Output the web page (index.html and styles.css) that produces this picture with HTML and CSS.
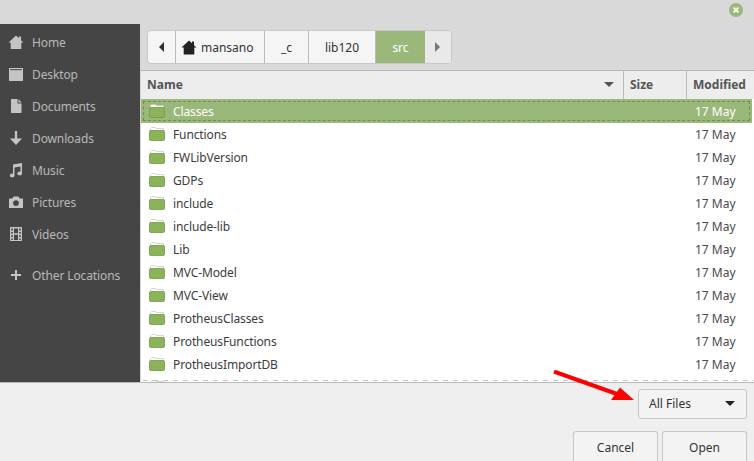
FILE: index.html
```html
<!DOCTYPE html>
<html lang="en">
<head>
<meta charset="utf-8">
<title>Open File</title>
<link rel="stylesheet" href="styles.css">
</head>
<body>
<div class="dialog">
  <header class="titlebar">
    <span class="close">
      <svg width="14" height="14" viewBox="0 0 14 14"><circle cx="7" cy="7" r="7" fill="#9ab87a"/><path d="M4.6 4.6l4.8 4.8M9.4 4.6l-4.8 4.8" stroke="#fff" stroke-width="2"/></svg>
    </span>
  </header>
  <div class="main">
    <nav class="sidebar">
      <div class="place"><svg class="pi" viewBox="0 0 16 16"><path d="M8 1.5L0.5 8.5h2.2V15h10.6V8.5h2.2L13 6.2V2.5h-2v1.8z"/></svg><span>Home</span></div>
      <div class="place"><svg class="pi" viewBox="0 0 16 16"><path d="M1 2h14v13H1z"/><path d="M2 3.2h12v1H2z" fill="#454545"/></svg><span>Desktop</span></div>
      <div class="place"><svg class="pi" viewBox="0 0 16 16"><path d="M3 1h6.5v4.5H13.500V15H3zM10.500 1l3 3.500h-3z"/></svg><span>Documents</span></div>
      <div class="place"><svg class="pi" viewBox="0 0 16 16"><path d="M6.800 1h2.400v7.500H14L8 15 2 8.500h4.800z"/></svg><span>Downloads</span></div>
      <div class="place"><svg class="pi" viewBox="0 0 16 16"><path d="M5 2.500L14 1v10.500a2.300 1.900 0 1 1-1.500-1.800V4.600L6.500 5.600v7.900a2.300 1.900 0 1 1-1.500-1.800z"/></svg><span>Music</span></div>
      <div class="place"><svg class="pi" viewBox="0 0 16 16"><path fill-rule="evenodd" d="M5.500 2.500h5l1 2H15v9.500H1V4.500h3.500zM8 6.200a2.900 2.900 0 1 0 0 5.800 2.900 2.900 0 0 0 0-5.800z"/></svg><span>Pictures</span></div>
      <div class="place"><svg class="pi" viewBox="0 0 16 16"><path fill-rule="evenodd" d="M2 1h12v14H2zM3.200 2.500v2h1.600v-2zM3.200 6v1.800h1.600V6zM3.200 9.300v1.800h1.600V9.300zM3.200 12.500v1.500h1.600v-1.500zM11.200 2.500v2h1.600v-2zM11.200 6v1.800h1.600V6zM11.200 9.300v1.800h1.600V9.300zM11.200 12.500v1.500h1.600v-1.500zM6 2.500v4.800h4V2.500zM6 8.700V14h4V8.700z"/></svg><span>Videos</span></div>
      <div class="place other"><svg class="pi" viewBox="0 0 16 16"><path d="M7 3h2v4h4v2H9v4H7V9H3V7h4z"/></svg><span>Other Locations</span></div>
    </nav>
    <section class="browser">
      <div class="pathbar-wrap">
        <div class="pathbar">
          <div class="seg arrow back"><svg width="6" height="10" viewBox="0 0 6 10"><path d="M5 0v10L0 5z" fill="#2e2e2e"/></svg></div>
          <div class="seg s-home"><svg width="16" height="15" viewBox="0 0 16 15"><path d="M8 0.500L0.500 7.500h2.200V14.500h10.600V7.500h2.200L13 5.200V1.500h-2v1.800z" fill="#222"/></svg><span>mansano</span></div>
          <div class="seg s-c">_c</div>
          <div class="seg s-lib">lib120</div>
          <div class="seg s-src">src</div>
          <div class="seg arrow fwd"><svg width="6" height="10" viewBox="0 0 6 10"><path d="M0 0v10l5-5z" fill="#777"/></svg></div>
        </div>
      </div>
      <div class="thead">
        <div class="th c-name"><span>Name</span><i class="sort"></i></div>
        <div class="th c-size">Size</div>
        <div class="th c-mod">Modified</div>
      </div>
      <div class="rows">
        <div class="row selected"><svg class="folder" viewBox="0 0 16 14"><use href="#fld"/></svg><span class="fname">Classes</span><span class="fdate">17 May</span></div>
        <div class="row"><svg class="folder" viewBox="0 0 16 14"><use href="#fld"/></svg><span class="fname">Functions</span><span class="fdate">17 May</span></div>
        <div class="row"><svg class="folder" viewBox="0 0 16 14"><use href="#fld"/></svg><span class="fname">FWLibVersion</span><span class="fdate">17 May</span></div>
        <div class="row"><svg class="folder" viewBox="0 0 16 14"><use href="#fld"/></svg><span class="fname">GDPs</span><span class="fdate">17 May</span></div>
        <div class="row"><svg class="folder" viewBox="0 0 16 14"><use href="#fld"/></svg><span class="fname">include</span><span class="fdate">17 May</span></div>
        <div class="row"><svg class="folder" viewBox="0 0 16 14"><use href="#fld"/></svg><span class="fname">include-lib</span><span class="fdate">17 May</span></div>
        <div class="row"><svg class="folder" viewBox="0 0 16 14"><use href="#fld"/></svg><span class="fname">Lib</span><span class="fdate">17 May</span></div>
        <div class="row"><svg class="folder" viewBox="0 0 16 14"><use href="#fld"/></svg><span class="fname">MVC-Model</span><span class="fdate">17 May</span></div>
        <div class="row"><svg class="folder" viewBox="0 0 16 14"><use href="#fld"/></svg><span class="fname">MVC-View</span><span class="fdate">17 May</span></div>
        <div class="row"><svg class="folder" viewBox="0 0 16 14"><use href="#fld"/></svg><span class="fname">ProtheusClasses</span><span class="fdate">17 May</span></div>
        <div class="row"><svg class="folder" viewBox="0 0 16 14"><use href="#fld"/></svg><span class="fname">ProtheusFunctions</span><span class="fdate">17 May</span></div>
        <div class="row"><svg class="folder" viewBox="0 0 16 14"><use href="#fld"/></svg><span class="fname">ProtheusImportDB</span><span class="fdate">17 May</span></div>
        <div class="row"><svg class="folder" viewBox="0 0 16 14"><use href="#fld"/></svg></div>
        <div class="dashes"></div>
      </div>
    </section>
  </div>
  <footer class="footer">
    <div class="filter-row">
      <div class="combo"><span>All Files</span><i class="caret"></i></div>
    </div>
    <div class="actions">
      <div class="btn">Cancel</div>
      <div class="btn">Open</div>
    </div>
    <svg class="red-arrow" width="90" height="40" viewBox="0 0 90 40"><path d="M3 1.500L66 24" stroke="#f00" stroke-width="4" fill="none"/><path d="M83 30L60 30L69 17.500z" fill="#f00"/></svg>
  </footer>
</div>
<svg width="0" height="0" class="defs">
  <defs>
    <g id="fld">
      <path d="M1.500 4V1.500L2.500 0.500H6.500L7.500 1.500H14.500V5z" fill="#fff" stroke="#c4c4c4" stroke-width="0.700"/>
      <rect x="0.500" y="3.500" width="15" height="10" rx="1.200" fill="#8ab35a" stroke="#739a48" stroke-width="0.800"/>
    </g>
  </defs>
</svg>
</body>
</html>
```
FILE: styles.css
```css
* { box-sizing: border-box; }
html, body { margin: 0; padding: 0; }
body {
  width: 754px;
  height: 461px;
  overflow: hidden;
  font-family: "Noto Sans", "Open Sans", sans-serif;
  font-size: 12px;
  color: #3a3a3a;
  background: #d8d8d8;
}
.dialog { width: 754px; height: 461px; display: flex; flex-direction: column; overflow: hidden; }
.defs { position: absolute; }

.titlebar { height: 24px; flex: none; background: #d9d9d9; display: flex; justify-content: flex-end; padding: 3px 11px 0 0; }
.close { width: 14px; height: 14px; display: block; }
.close svg { display: block; }

.main { flex: none; height: 358px; display: flex; }

.sidebar { flex: none; width: 140px; background: #454545; color: #b8b8b8; padding-top: 2px; }
.place { height: 32px; display: flex; align-items: center; padding-left: 8px; gap: 8px; letter-spacing: -0.12px; }
.place.other { margin-top: 9px; }
.pi { width: 16px; height: 16px; fill: #c4c4c4; flex: none; }

.browser { flex: 1; min-width: 0; display: flex; flex-direction: column; background: #fff; border-left: 1px solid #d4d4d4; }
.pathbar-wrap { flex: none; height: 47px; background: #d9d9d9; padding: 6px 0 0 6px; border-bottom: 1px solid #b8b8b8; }
.pathbar { display: inline-flex; height: 34px; border: 1px solid #c8c8c8; border-radius: 4px; background: #f5f5f5; overflow: hidden; color: #333; }
.seg { display: flex; align-items: center; justify-content: center; border-right: 1px solid #bcbcbc; }
.back { width: 28px; }
.s-home { width: 89px; gap: 4px; justify-content: flex-start; padding-left: 5px; }
.s-c { width: 44px; }
.s-lib { width: 67px; }
.s-src { width: 49px; background: #9ab87a; color: #fff; border-right: none; }
.fwd { width: 26px; background: #e9e9e9; border-right: none; }

.thead { flex: none; height: 28px; display: flex; background: #ededed; font-weight: 700; color: #555; }
.th { display: flex; align-items: center; border-right: 1px solid #bcbcbc; padding: 0 0 1px 6px; height: 28px; }
.c-name { width: 483px; justify-content: space-between; padding-right: 9px; }
.c-size { width: 63px; }
.c-mod { flex: 1; border-right: none; }
.sort { width: 0; height: 0; border-left: 5px solid transparent; border-right: 5px solid transparent; border-top: 5px solid #555; }

.rows { flex: 1; min-height: 0; overflow: hidden; position: relative; }
.row { height: 23px; display: flex; align-items: center; padding-left: 8px; color: #3c3c3c; letter-spacing: -0.12px; }
.row.selected { background: #9ab87a; color: #fff; outline: 1px dashed #6f8d56; outline-offset: -3px; height: 24px; margin-right: 2px; }
.folder { width: 16px; height: 14px; flex: none; margin-bottom: 1px; }
.fname { margin-left: 8px; width: 522px; flex: none; }
.fdate { color: #4a4a4a; letter-spacing: 0; }
.selected .fdate { color: #fff; }
.dashes { position: absolute; left: 2px; right: 0; bottom: 1px; height: 1px; background: repeating-linear-gradient(90deg, #c4c4c4 0 5px, transparent 5px 10px); }

.footer { flex: 1; position: relative; background: #efefef; border-top: 1px solid #b8b8b8; }
.filter-row { display: flex; justify-content: flex-end; padding: 6px 7px 0 0; }
.combo { width: 109px; height: 30px; border: 1px solid #c8c8c8; border-radius: 3px; background: #f3f3f3; color: #333; display: flex; align-items: center; justify-content: space-between; padding: 0 11px 1px 10px; }
.caret { width: 0; height: 0; border-left: 5px solid transparent; border-right: 5px solid transparent; border-top: 5px solid #222; }
.actions { display: flex; justify-content: flex-end; gap: 4px; padding: 12px 7px 0 0; }
.btn { width: 85px; height: 36px; border: 1px solid #c8c8c8; border-bottom: none; border-radius: 3px 3px 0 0; background: #f3f3f3; color: #333; display: flex; align-items: center; justify-content: center; padding-bottom: 4px; }
.red-arrow { position: absolute; left: 551px; top: -13px; }
```
